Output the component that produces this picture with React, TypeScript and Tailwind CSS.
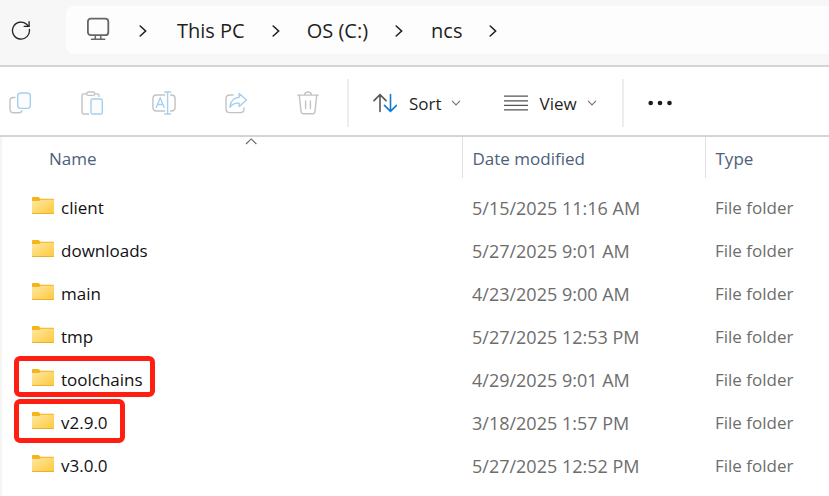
import React from 'react';

interface Entry {
  name: string;
  modified: string;
  highlight?: string;
}

const entries: Entry[] = [
  { name: 'client', modified: '5/15/2025 11:16 AM' },
  { name: 'downloads', modified: '5/27/2025 9:01 AM' },
  { name: 'main', modified: '4/23/2025 9:00 AM' },
  { name: 'tmp', modified: '5/27/2025 12:53 PM' },
  { name: 'toolchains', modified: '4/29/2025 9:01 AM', highlight: '-top-0.5 h-[41px] w-[141px]' },
  { name: 'v2.9.0', modified: '3/18/2025 1:57 PM', highlight: '-top-0.5 h-11 w-[111px]' },
  { name: 'v3.0.0', modified: '5/27/2025 12:52 PM' },
];

const RefreshIcon = () => (
  <svg width="20" height="20" viewBox="0 0 20 20" fill="none" stroke="#222" strokeWidth="1.3" strokeLinecap="round">
    <path d="M18.4 9.4A8.5 8.5 0 1 1 15.6 4.2L17.6 6.2" />
    <path d="M18.1 1.6V6.4H13.2" />
  </svg>
);

const MonitorIcon = () => (
  <svg width="24" height="24" viewBox="0 0 24 24" fill="none" stroke="#666" strokeWidth="1.8" strokeLinecap="round">
    <rect x="1.9" y="1.6" width="20.4" height="16.6" rx="3" />
    <path d="M9.3 18.4V22M14.8 18.4V22M5.5 22.2H18.7" strokeWidth="1.5" />
  </svg>
);

const CrumbChevron = () => (
  <svg width="8" height="12" viewBox="0 0 8 12" fill="none" stroke="#222" strokeWidth="1.6" strokeLinecap="round">
    <path d="M1.2 1L6.6 6L1.2 11" />
  </svg>
);

const ChevronDown = () => (
  <svg width="10" height="6" viewBox="0 0 10 6" fill="none" stroke="#777" strokeWidth="1.1">
    <path d="M1 0.8L5 4.9L9 0.8" />
  </svg>
);

const CopyIcon = () => (
  <svg width="24" height="24" viewBox="0 0 24 24" fill="none" strokeWidth="1.4" strokeLinecap="round">
    <path d="M7 6.5H5.2Q2 6.5 2 9.7V18Q2 21.8 5.8 21.8H10.5Q13.4 21.8 14 19.8" stroke="#c3c3c3" />
    <rect x="9.7" y="2" width="12.6" height="15.4" rx="3" stroke="#a5cff0" fill="#fcfcfc" />
  </svg>
);

const PasteIcon = () => (
  <svg width="24" height="24" viewBox="0 0 24 24" fill="none" strokeWidth="1.4" strokeLinecap="round">
    <path d="M6.5 2.9H3.4Q2 2.9 2 4.3V21.6Q2 23 3.4 23H8.6M14.8 2.9H17.6Q19 2.9 19 4.3V5.5" stroke="#c3c3c3" />
    <rect x="6.7" y="1" width="8" height="3.4" rx="1.7" stroke="#c3c3c3" />
    <rect x="11" y="8" width="11.3" height="15" rx="1.6" stroke="#a5cff0" fill="#fcfcfc" />
  </svg>
);

const RenameIcon = () => (
  <svg width="24" height="24" viewBox="0 0 24 24" fill="none" strokeWidth="1.4" strokeLinecap="round">
    <path d="M12.7 4H4.6Q0.9 4 0.9 7.7V16.3Q0.9 20 4.6 20H12.7M18.6 4H19.3Q23.1 4 23.1 7.7V16.3Q23.1 20 19.3 20H18.6" stroke="#c3c3c3" />
    <path d="M4.3 16.4L8.2 7L12.2 16.4M5.6 13.5H10.9M15.6 1V23M12.7 1H18.6M12.7 23H18.6" stroke="#a5cff0" />
  </svg>
);

const ShareIcon = () => (
  <svg width="24" height="24" viewBox="0 0 24 24" fill="none" strokeWidth="1.4" strokeLinecap="round" strokeLinejoin="round">
    <path d="M9.2 4H5.6Q2 4 2 7.6V17.8Q2 21.6 5.8 21.6H16.4Q20 21.6 20 18V17" stroke="#c3c3c3" />
    <path d="M15.2 2.5L22.5 9L15.2 15.6V12.2Q9.5 11.6 5.9 16.2Q6.7 6.8 15.2 6.2Z" stroke="#a5cff0" />
  </svg>
);

const DeleteIcon = () => (
  <svg width="24" height="24" viewBox="0 0 24 24" fill="none" stroke="#c3c3c3" strokeWidth="1.4" strokeLinecap="round">
    <path d="M1.7 4.1H22.3M8.6 4Q8.8 1 12 1Q15.2 1 15.4 4" />
    <path d="M3.3 4.3L5 20.3Q5.3 22.8 7.6 22.8H16.4Q18.7 22.8 19 20.3L20.7 4.3M9.6 10V17.5M14.4 10V17.5" />
  </svg>
);

const SortIcon = () => (
  <svg width="24" height="20" viewBox="0 0 24 20" fill="none" strokeWidth="1.6" strokeLinecap="round">
    <path d="M7 18.5V2M1 7.6L7 1.6L13 7.6" stroke="#555" />
    <path d="M17.5 1.5V18M11.5 12.4L17.5 18.4L23.5 12.4" stroke="#0f7bd4" />
  </svg>
);

const ViewIcon = () => (
  <svg width="24" height="16" viewBox="0 0 24 16" stroke="#555" strokeWidth="1.3">
    <path d="M0 1.2H24M0 5.8H24M0 10.3H24M0 14.9H24" />
  </svg>
);

const MoreIcon = () => (
  <svg width="24" height="6" viewBox="0 0 24 6" fill="#1b1b1b">
    <circle cx="2.7" cy="3" r="2.3" />
    <circle cx="12" cy="3" r="2.3" />
    <circle cx="21.5" cy="3" r="2.3" />
  </svg>
);

const FolderIcon = () => (
  <svg width="22" height="17" viewBox="0 0 22 17" className="shrink-0">
    <defs>
      <linearGradient id="folder" x1="0" y1="0" x2="1" y2="1">
        <stop offset="0" stopColor="#ffe8a3" />
        <stop offset="1" stopColor="#fdc93b" />
      </linearGradient>
    </defs>
    <path d="M0 0.8Q0 0 0.8 0H6.6L8.4 1.8H21.2Q22 1.8 22 2.6V8H0Z" fill="#f5b41c" />
    <path d="M0 4H7L8.8 2.8H22V16.2Q22 17 21.2 17H0.8Q0 17 0 16.2Z" fill="url(#folder)" />
    <path d="M0 16H22V16.2Q22 17 21.2 17H0.8Q0 17 0 16.2Z" fill="#e9b12f" />
  </svg>
);

const tools = [
  { label: 'Copy', Icon: CopyIcon },
  { label: 'Paste', Icon: PasteIcon },
  { label: 'Rename', Icon: RenameIcon },
  { label: 'Share', Icon: ShareIcon },
  { label: 'Delete', Icon: DeleteIcon },
];

const AddressBar: React.FC = () => (
  <header className="flex items-start border-b-2 border-[#d4d4d4] bg-[#f7f7f7] pt-1.5 pb-[11px] pl-[11px]">
    <button aria-label="Refresh" className="flex h-12 w-[55px] shrink-0 items-center">
      <RefreshIcon />
    </button>
    <nav aria-label="Path" className="flex h-12 flex-1 items-center rounded-l-lg bg-[#fdfdfd] pt-0.5 pl-5 text-xl text-[#1f1f1f]">
      <button aria-label="Locations" className="mr-[29px] pb-1"><MonitorIcon /></button>
      <CrumbChevron />
      <button className="ml-[30px] mr-[27px]">This PC</button>
      <CrumbChevron />
      <button className="mx-[27px]">OS (C:)</button>
      <CrumbChevron />
      <button className="ml-7 mr-[27px]">ncs</button>
      <CrumbChevron />
    </nav>
  </header>
);

const Toolbar: React.FC = () => (
  <div role="toolbar" className="flex h-[70px] items-center border-b-2 border-[#d4d4d4] bg-white pl-2 pt-1 text-[17px] text-[#1f1f1f]">
    <div className="flex gap-12">
      {tools.map(({ label, Icon }) => (
        <button key={label} aria-label={label} disabled>
          <Icon />
        </button>
      ))}
    </div>
    <div className="ml-[27px] h-12 w-0.5 bg-[#ededed]" />
    <button className="ml-6 flex items-center">
      <SortIcon />
      <span className="ml-3 mr-[9px] pt-px">Sort</span>
      <ChevronDown />
    </button>
    <button className="ml-[43px] flex items-center">
      <ViewIcon />
      <span className="ml-3 mr-2.5 pt-px">View</span>
      <ChevronDown />
    </button>
    <div className="ml-[25px] h-12 w-0.5 bg-[#ededed]" />
    <button aria-label="See more" className="ml-6"><MoreIcon /></button>
  </div>
);

const FileTable: React.FC = () => (
  <table className="w-full table-fixed border-collapse text-left text-[17px]">
    <colgroup>
      <col className="w-[460px]" />
      <col className="w-[243px]" />
      <col />
    </colgroup>
    <thead>
      <tr className="h-[41px] text-[#4c607a]">
        <th className="relative p-0 pt-0.5 pl-[47px] font-normal">
          Name
          <svg width="12" height="7" viewBox="0 0 12 7" fill="none" stroke="#666" strokeWidth="1.1" className="absolute left-[243px] top-px">
            <path d="M1 6L6.2 0.9L11.4 6" />
          </svg>
        </th>
        <th className="border-l border-[#e0e0e0] p-0 pt-0.5 pl-[10px] font-normal">Date modified</th>
        <th className="border-l border-[#e0e0e0] p-0 pt-0.5 pl-[10px] font-normal">Type</th>
      </tr>
    </thead>
    <tbody>
      <tr className="h-2"><td colSpan={3} className="p-0" /></tr>
      {entries.map((entry) => (
        <tr key={entry.name} className="h-[43px] text-[#6d6d6d]">
          <td className="relative p-0 pl-[30px] text-[#111]">
            {entry.highlight && (
              <span className={`absolute left-3 rounded-md border-[5px] border-[#ff1f12] ${entry.highlight}`} />
            )}
            <span className="flex items-center gap-[7px]">
              <span className="pb-1"><FolderIcon /></span>
              {entry.name}
            </span>
          </td>
          <td className="p-0 pl-[10px] text-lg">{entry.modified}</td>
          <td className="p-0 pl-[10px]">File folder</td>
        </tr>
      ))}
    </tbody>
  </table>
);

const App: React.FC = () => {
  return (
    <div className="flex min-h-screen flex-col overflow-hidden bg-white font-['Open_Sans','Noto_Sans',sans-serif]">
      <AddressBar />
      <Toolbar />
      <main className="flex-1 border-l-2 border-[#f5f5f5]">
        <FileTable />
      </main>
    </div>
  );
};

export default App;
